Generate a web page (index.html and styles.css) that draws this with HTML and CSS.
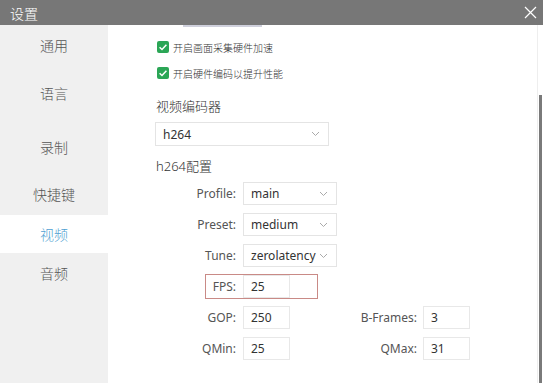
FILE: index.html
```html
<!DOCTYPE html>
<html lang="zh-CN">
<head>
    <meta charset="UTF-8">
    <meta name="viewport" content="width=device-width, initial-scale=1.0">
    <title>设置</title>
    <link rel="stylesheet" href="styles.css">
</head>
<body>
    <div class="window">
        <!-- Title bar -->
        <div class="titlebar">
            <span class="title">设置</span>
            <svg class="close" width="13" height="13" viewBox="0 0 13 13">
                <path d="M1 1 L12 12 M12 1 L1 12" stroke="#fff" stroke-width="1.2" fill="none"/>
            </svg>
        </div>

        <div class="main">
            <!-- Sidebar -->
            <div class="sidebar">
                <div class="nav-item">通用</div>
                <div class="nav-item">语言</div>
                <div class="nav-item">录制</div>
                <div class="nav-item">快捷键</div>
                <div class="nav-item active">视频</div>
                <div class="nav-item">音频</div>
            </div>

            <!-- Settings -->
            <div class="content">
                <div class="peek-line"></div>

                <label class="check-row">
                    <span class="checkbox"><svg width="12" height="12" viewBox="0 0 12 12"><path d="M2.6 6.2 L5 8.5 L9.4 3.8" stroke="#fff" stroke-width="1.5" fill="none"/></svg></span>
                    开启画面采集硬件加速
                </label>
                <label class="check-row">
                    <span class="checkbox"><svg width="12" height="12" viewBox="0 0 12 12"><path d="M2.6 6.2 L5 8.5 L9.4 3.8" stroke="#fff" stroke-width="1.5" fill="none"/></svg></span>
                    开启硬件编码以提升性能
                </label>

                <div class="section-title first">视频编码器</div>
                <div class="select wide">
                    <span>h264</span>
                    <svg class="chevron" width="9" height="6" viewBox="0 0 9 6"><path d="M1 1 L4.5 4.5 L8 1" stroke="#aaa" stroke-width="1" fill="none"/></svg>
                </div>

                <div class="section-title">h264配置</div>
                <div class="config">
                    <div class="row">
                        <span class="label">Profile:</span>
                        <div class="select">
                            <span>main</span>
                            <svg class="chevron" width="9" height="6" viewBox="0 0 9 6"><path d="M1 1 L4.5 4.5 L8 1" stroke="#aaa" stroke-width="1" fill="none"/></svg>
                        </div>
                    </div>
                    <div class="row">
                        <span class="label">Preset:</span>
                        <div class="select">
                            <span>medium</span>
                            <svg class="chevron" width="9" height="6" viewBox="0 0 9 6"><path d="M1 1 L4.5 4.5 L8 1" stroke="#aaa" stroke-width="1" fill="none"/></svg>
                        </div>
                    </div>
                    <div class="row">
                        <span class="label">Tune:</span>
                        <div class="select">
                            <span>zerolatency</span>
                            <svg class="chevron" width="9" height="6" viewBox="0 0 9 6"><path d="M1 1 L4.5 4.5 L8 1" stroke="#aaa" stroke-width="1" fill="none"/></svg>
                        </div>
                    </div>
                    <div class="row highlight">
                        <span class="label">FPS:</span>
                        <div class="input">25</div>
                    </div>
                    <div class="row">
                        <span class="label">GOP:</span>
                        <div class="input">250</div>
                        <span class="label right">B-Frames:</span>
                        <div class="input">3</div>
                    </div>
                    <div class="row">
                        <span class="label">QMin:</span>
                        <div class="input">25</div>
                        <span class="label right">QMax:</span>
                        <div class="input">31</div>
                    </div>
                </div>
            </div>

            <!-- Scrollbar -->
            <div class="scrollbar">
                <div class="thumb"></div>
            </div>
        </div>
    </div>
</body>
</html>
```

FILE: styles.css
```css
body {
    margin: 0;
    padding: 0;
    font-family: "Noto Sans", "Noto Sans CJK SC", sans-serif;
    background: #fff;
}
.window {
    width: 543px;
    height: 383px;
    display: flex;
    flex-direction: column;
    overflow: hidden;
}
.titlebar {
    height: 25px;
    background: #777777;
    display: flex;
    align-items: center;
    justify-content: space-between;
    padding: 0 6px 0 10px;
    flex-shrink: 0;
}
.titlebar .title {
    color: #fff;
    font-size: 14px;
    font-weight: 300;
    font-family: "Noto Sans CJK SC", sans-serif;
}
.main {
    flex: 1;
    display: flex;
    min-height: 0;
}
.sidebar {
    width: 108px;
    background: #f0f0f0;
    flex-shrink: 0;
}
.nav-item {
    height: 38px;
    line-height: 38px;
    text-align: center;
    font-size: 14px;
    font-weight: 300;
    color: #555;
    font-family: "Noto Sans CJK SC", sans-serif;
}
.nav-item:nth-child(1) { margin-top: 1px; }
.nav-item:nth-child(2) { margin-top: 10px; }
.nav-item:nth-child(3) { margin-top: 16px; }
.nav-item:nth-child(4) { margin-top: 9px; }
.nav-item:nth-child(5) { margin-top: 2px; }
.nav-item:nth-child(6) { margin-top: 1px; }
.nav-item.active {
    background: #fff;
    color: #4f9fd2;
}
.content {
    flex: 1;
    padding-left: 47px;
}
.peek-line {
    width: 79px;
    height: 2px;
    background: #cfd0dc;
    margin-left: 28px;
}
.check-row {
    display: flex;
    align-items: center;
    gap: 4px;
    height: 12px;
    margin-top: 14px;
    font-size: 10px;
    font-weight: 300;
    color: #333;
    font-family: "Noto Sans CJK SC", sans-serif;
    margin-left: 2px;
}
.check-row + .check-row {
    margin-top: 14px;
}
.checkbox {
    width: 12px;
    height: 12px;
    border-radius: 2px;
    background: #2ba656;
    display: flex;
}
.section-title {
    font-size: 13px;
    font-weight: 300;
    color: #333;
    line-height: 18px;
    margin-top: 11px;
    margin-left: 1px;
}
.section-title.first {
    margin-top: 18px;
}
.select {
    width: 94px;
    height: 23px;
    box-sizing: border-box;
    border: 1px solid #e4e4e4;
    display: flex;
    align-items: center;
    justify-content: space-between;
    padding: 0 8px 0 7px;
    font-size: 12px;
    color: #333;
}
.select.wide {
    width: 174px;
    height: 24px;
    margin-top: 7px;
    padding-left: 7px;
}
.config {
    margin-top: 7px;
    display: flex;
    flex-direction: column;
    gap: 8px;
}
.row {
    display: flex;
    align-items: center;
    height: 23px;
    position: relative;
}
.label {
    width: 81px;
    text-align: right;
    font-size: 12px;
    color: #555;
    margin-right: 7px;
}
.label.right {
    width: 127px;
    margin-right: 6px;
}
.input {
    width: 47px;
    height: 23px;
    box-sizing: border-box;
    border: 1px solid #e8e8e8;
    padding-left: 7px;
    font-size: 12px;
    line-height: 21px;
    color: #333;
}
.highlight::after {
    content: "";
    position: absolute;
    left: 50px;
    top: -1px;
    width: 113px;
    height: 25px;
    border: 1px solid #c98a86;
    box-sizing: border-box;
}
.scrollbar {
    width: 5px;
    flex-shrink: 0;
    background: #fff;
    border-left: 1px solid #eee;
    display: flex;
    flex-direction: column;
    justify-content: flex-end;
}
.scrollbar .thumb {
    height: 288px;
    width: 3px;
    margin-left: 1px;
    background: #7a7a7a;
}
```
